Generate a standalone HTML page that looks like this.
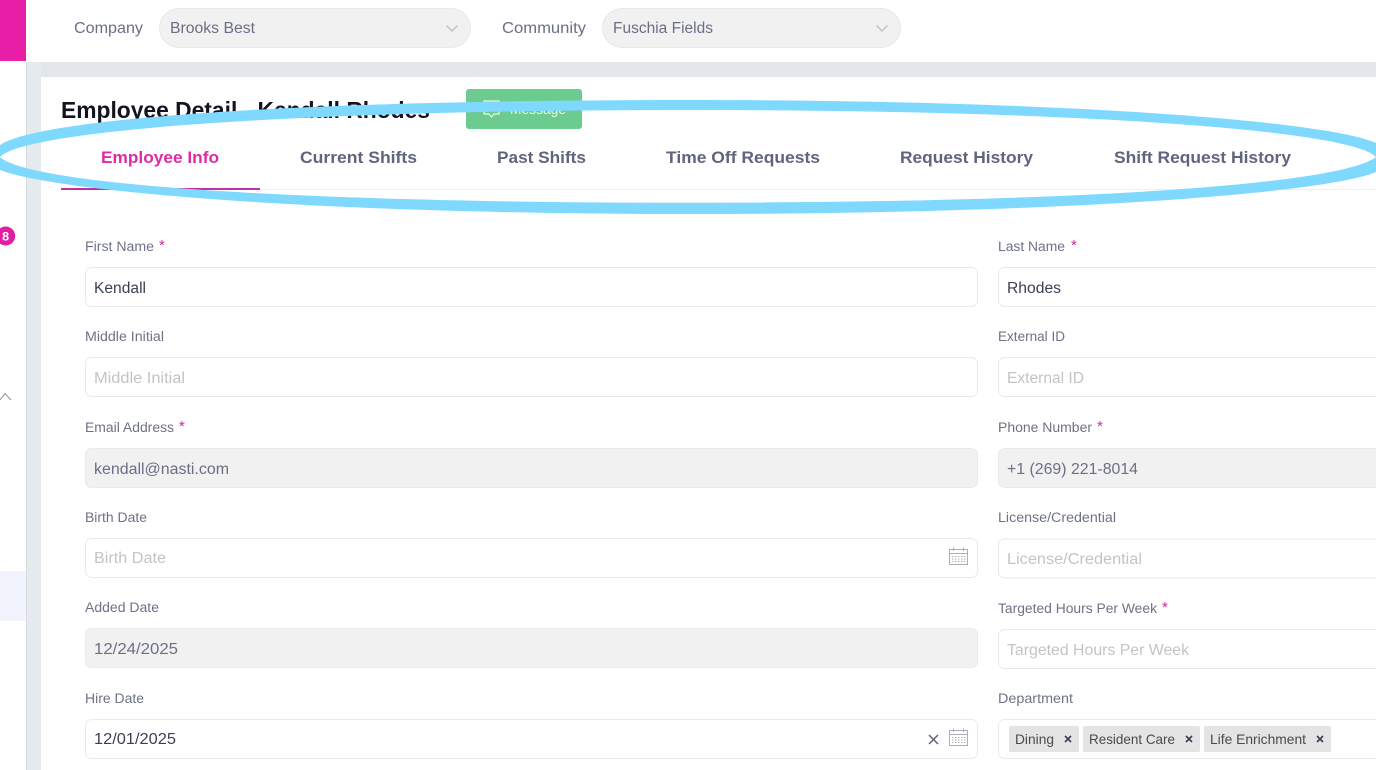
<!DOCTYPE html>
<html lang="en">
<head>
<meta charset="utf-8">
<title>Employee Detail</title>
<style>
html,body{margin:0;padding:0;width:1376px;height:770px;overflow:hidden;background:#fff}
svg{display:block;position:absolute;left:0;top:0}
text{font-family:"Liberation Sans",sans-serif;white-space:pre}
.lb{font-size:13.5px;fill:#6e7286}
.v{font-size:15.5px;fill:#3b3f55}
.ph{font-size:15.5px;fill:#c4c4c8}
.dv{font-size:15.5px;fill:#6b6f85}
.st{font-size:15px;fill:#d0279f}
.tb{font-size:17px;font-weight:700;fill:#61647d}
.tg{font-size:14px;fill:#4a4a50}
.in{fill:#fff;stroke:#e9eaee;stroke-width:1}
.dis{fill:#f1f1f2;stroke:#e9eaee;stroke-width:1}
</style>
</head>
<body>
<svg width="1376" height="770" viewBox="0 0 1376 770" xmlns="http://www.w3.org/2000/svg">
<rect width="1376" height="770" fill="#fff"/>
<rect x="0" y="0" width="26" height="61" fill="#e91ea6"/>
<rect x="0" y="571" width="26" height="50" fill="#f1f4fd"/>
<circle cx="5.7" cy="236" r="9.5" fill="#e01fa5"/>
<text x="2.2" y="240.500" font-size="12" font-weight="700" fill="#fff" textLength="7" lengthAdjust="spacingAndGlyphs">8</text>
<path d="M0 400L5 393.500L11 400" fill="none" stroke="#8a8e9c" stroke-width="1"/>
<rect x="26" y="62" width="1350" height="15" fill="#e3e7ed"/>
<rect x="26" y="62" width="15" height="708" fill="#e5eaef"/>
<rect x="26" y="62" width="1" height="708" fill="#d6dbe0"/>
<rect x="41" y="77" width="1335" height="693" fill="#fff"/>

<text x="74" y="33" font-size="15.5" fill="#6b6f85" textLength="69" lengthAdjust="spacingAndGlyphs">Company</text>
<rect x="159.500" y="8.500" width="311" height="39" rx="19.500" fill="#f1f1f2" stroke="#e9e9eb"/>
<text x="170" y="33" font-size="15.500" fill="#6b6f85" textLength="85" lengthAdjust="spacingAndGlyphs">Brooks Best</text>
<path d="M446.500 25.500L452 31L457.500 25.500" fill="none" stroke="#c2c3c9" stroke-width="1.500"/>
<text x="502" y="33" font-size="15.500" fill="#6b6f85" textLength="84" lengthAdjust="spacingAndGlyphs">Community</text>
<rect x="602.500" y="8.500" width="298" height="39" rx="19.500" fill="#f1f1f2" stroke="#e9e9eb"/>
<text x="613" y="33" font-size="15.500" fill="#6b6f85" textLength="100" lengthAdjust="spacingAndGlyphs">Fuschia Fields</text>
<path d="M876.500 25.500L882 31L887.500 25.500" fill="none" stroke="#c2c3c9" stroke-width="1.500"/>

<text x="61" y="118" font-size="23" font-weight="700" fill="#12141f" textLength="369" lengthAdjust="spacingAndGlyphs">Employee Detail - Kendall Rhodes</text>
<rect x="466" y="89" width="116" height="40" rx="3" fill="#6ccb8e"/>
<path d="M484 101H499V114H494L491.500 117L489 114H484Z" fill="none" stroke="#e8f7ee" stroke-width="1.200"/>
<text x="510" y="114" font-size="14" fill="#e8f7ee" textLength="56" lengthAdjust="spacingAndGlyphs">Message</text>

<text class="tb" x="101" y="163" style="fill:#dc2ca5" textLength="118" lengthAdjust="spacingAndGlyphs">Employee Info</text>
<text class="tb" x="300" y="163" textLength="117" lengthAdjust="spacingAndGlyphs">Current Shifts</text>
<text class="tb" x="497" y="163" textLength="89" lengthAdjust="spacingAndGlyphs">Past Shifts</text>
<text class="tb" x="666" y="163" textLength="154" lengthAdjust="spacingAndGlyphs">Time Off Requests</text>
<text class="tb" x="900" y="163" textLength="133" lengthAdjust="spacingAndGlyphs">Request History</text>
<text class="tb" x="1114" y="163" textLength="177" lengthAdjust="spacingAndGlyphs">Shift Request History</text>
<rect x="61" y="189" width="1315" height="1" fill="#eceef2"/>
<rect x="61" y="188" width="199" height="2" fill="#c22fa6"/>

<path fill="#7fd9ff" fill-rule="evenodd" d="M0 145C40 118 300 100 688 100C1076 100 1330 122 1376 143L1376 172C1330 192 1076 214 688 214C300 214 50 190 0 170Z M0 157C25 130 300 110 688 110C1076 110 1351 130 1376 157C1340 185 1076 202.700 688 202.700C300 202.700 30 185 0 157Z"/>

<text class="lb" x="85" y="251" textLength="69" lengthAdjust="spacingAndGlyphs">First Name</text>
<text class="st" x="159" y="250">*</text>
<text class="lb" x="998" y="251" textLength="67" lengthAdjust="spacingAndGlyphs">Last Name</text>
<text class="st" x="1071" y="250">*</text>
<rect class="in" x="85.500" y="267.500" width="892" height="39" rx="6"/>
<rect class="in" x="998.500" y="267.500" width="400" height="39" rx="6"/>
<text class="v" x="94" y="293" textLength="52" lengthAdjust="spacingAndGlyphs">Kendall</text>
<text class="v" x="1007" y="293" textLength="54" lengthAdjust="spacingAndGlyphs">Rhodes</text>

<text class="lb" x="85" y="341" textLength="79" lengthAdjust="spacingAndGlyphs">Middle Initial</text>
<text class="lb" x="998" y="341" textLength="67" lengthAdjust="spacingAndGlyphs">External ID</text>
<rect class="in" x="85.500" y="357.500" width="892" height="39" rx="6"/>
<rect class="in" x="998.500" y="357.500" width="400" height="39" rx="6"/>
<text class="ph" x="94" y="383" textLength="91" lengthAdjust="spacingAndGlyphs">Middle Initial</text>
<text class="ph" x="1007" y="383" textLength="77" lengthAdjust="spacingAndGlyphs">External ID</text>

<text class="lb" x="85" y="432" textLength="89" lengthAdjust="spacingAndGlyphs">Email Address</text>
<text class="st" x="179" y="431">*</text>
<text class="lb" x="998" y="432" textLength="94" lengthAdjust="spacingAndGlyphs">Phone Number</text>
<text class="st" x="1097" y="431">*</text>
<rect class="dis" x="85.500" y="448.500" width="892" height="39" rx="6"/>
<rect class="dis" x="998.500" y="448.500" width="400" height="39" rx="6"/>
<text class="dv" x="94" y="474" textLength="135" lengthAdjust="spacingAndGlyphs">kendall@nasti.com</text>
<text class="dv" x="1007" y="474" textLength="131" lengthAdjust="spacingAndGlyphs">+1 (269) 221-8014</text>

<text class="lb" x="85" y="522" textLength="62" lengthAdjust="spacingAndGlyphs">Birth Date</text>
<text class="lb" x="998" y="522" textLength="118" lengthAdjust="spacingAndGlyphs">License/Credential</text>
<rect class="in" x="85.500" y="538.500" width="892" height="39" rx="6"/>
<rect class="in" x="998.500" y="539" width="400" height="39" rx="6"/>
<text class="ph" x="94" y="563" textLength="72" lengthAdjust="spacingAndGlyphs">Birth Date</text>
<text class="ph" x="1007" y="564" textLength="135" lengthAdjust="spacingAndGlyphs">License/Credential</text>
<g fill="none" stroke="#a9aeb8" stroke-width="1">
<rect x="949.500" y="549.500" width="18" height="15"/>
<path d="M949.500 553.500H967.500M953.500 547.500V551M963.500 547.500V551"/>
<path d="M952 556.500H965.500M952 559H965.500M952 561.500H965.500" stroke-dasharray="1.500 1.500"/>
</g>

<text class="lb" x="85" y="612" textLength="74" lengthAdjust="spacingAndGlyphs">Added Date</text>
<text class="lb" x="998" y="613" textLength="159" lengthAdjust="spacingAndGlyphs">Targeted Hours Per Week</text>
<text class="st" x="1162" y="612">*</text>
<rect class="dis" x="85.500" y="628.500" width="892" height="39" rx="6"/>
<rect class="in" x="998.500" y="629.500" width="400" height="39" rx="6"/>
<text class="dv" x="94" y="654" textLength="84" lengthAdjust="spacingAndGlyphs">12/24/2025</text>
<text class="ph" x="1007" y="655" textLength="182" lengthAdjust="spacingAndGlyphs">Targeted Hours Per Week</text>

<text class="lb" x="85" y="703" textLength="59" lengthAdjust="spacingAndGlyphs">Hire Date</text>
<text class="lb" x="998" y="703" textLength="75" lengthAdjust="spacingAndGlyphs">Department</text>
<rect class="in" x="85.500" y="719.500" width="892" height="39" rx="6"/>
<rect class="in" x="998.500" y="719.500" width="400" height="39" rx="6"/>
<text class="v" x="94" y="744" textLength="82" lengthAdjust="spacingAndGlyphs">12/01/2025</text>
<path d="M929 735L938 744M938 735L929 744" fill="none" stroke="#5f6473" stroke-width="1.500"/>
<g fill="none" stroke="#a9aeb8" stroke-width="1">
<rect x="949.500" y="730.500" width="18" height="15"/>
<path d="M949.500 734.500H967.500M953.500 728.500V732M963.500 728.500V732"/>
<path d="M952 737.500H965.500M952 740H965.500M952 742.500H965.500" stroke-dasharray="1.500 1.500"/>
</g>

<rect x="1009" y="726" width="70" height="26" rx="2" fill="#e4e4e4"/>
<rect x="1083" y="726" width="117" height="26" rx="2" fill="#e4e4e4"/>
<rect x="1204" y="726" width="127" height="26" rx="2" fill="#e4e4e4"/>
<text class="tg" x="1015" y="744" textLength="39" lengthAdjust="spacingAndGlyphs">Dining</text>
<text class="tg" x="1089" y="744" textLength="86" lengthAdjust="spacingAndGlyphs">Resident Care</text>
<text class="tg" x="1210" y="744" textLength="96" lengthAdjust="spacingAndGlyphs">Life Enrichment</text>
<path d="M1065 736L1071 742M1071 736L1065 742M1186 736L1192 742M1192 736L1186 742M1317 736L1323 742M1323 736L1317 742" fill="none" stroke="#3b3f4d" stroke-width="1.600"/>
</svg>
</body>
</html>
